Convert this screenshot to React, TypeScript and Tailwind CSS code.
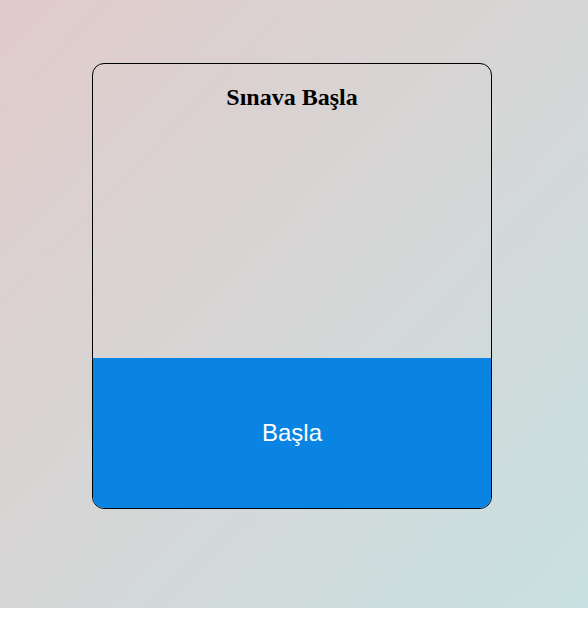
export default function App() {
  return (
    <div className="h-[608px] w-full bg-gradient-to-br from-[#e1cbcb] via-[#d6d6d6] to-[#c8e0e1] pt-[63px] pl-[92px]">
      <div className="flex h-[446px] w-[400px] flex-col overflow-hidden rounded-[12px] border border-black">
        <div className="flex flex-1 justify-center pt-[15px]">
          <h2 className="font-['Liberation_Serif',serif] text-[24px] leading-[36px] font-bold text-black">Sınava Başla</h2>
        </div>
        <button className="flex h-[150px] items-center justify-center bg-[#0984e3] font-['Liberation_Sans',Arial,sans-serif] text-[24px] text-white">
          Başla
        </button>
      </div>
    </div>
  );
}
